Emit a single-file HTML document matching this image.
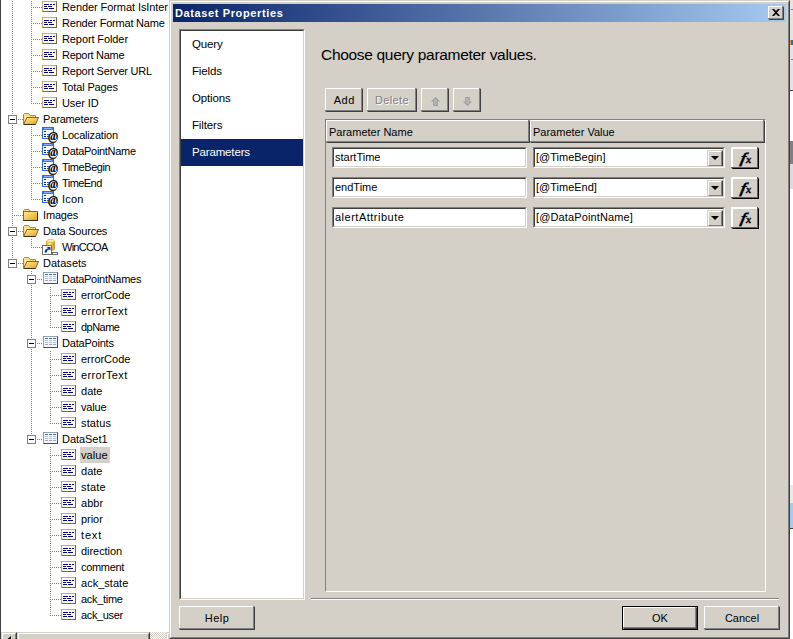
<!DOCTYPE html>
<html><head><meta charset="utf-8"><title>Dataset Properties</title>
<style>
html,body{margin:0;padding:0;}
body{width:793px;height:639px;position:relative;overflow:hidden;background:#fff;font-family:"Liberation Sans",sans-serif;}
*{box-sizing:border-box;}
i,b{display:block;font-style:normal;font-weight:normal;}
#tree{position:absolute;left:0;top:0;width:169px;height:639px;background:#fff;overflow:hidden;font-size:11px;letter-spacing:-0.25px;color:#000;}
#tree .edge{position:absolute;left:0;top:0;width:1px;height:639px;background:#404040;}
.vd{position:absolute;width:1px;background:repeating-linear-gradient(to bottom,#808080 0,#808080 1px,transparent 1px,transparent 2px);}
.hd{position:absolute;height:1px;background:repeating-linear-gradient(to right,#808080 0,#808080 1px,transparent 1px,transparent 2px);}
.bx{position:absolute;width:9px;height:9px;border:1px solid #808080;background:#fff;}
.bx b{position:absolute;left:1px;top:3px;width:5px;height:1px;background:#000;}
.ic{position:absolute;display:block;overflow:visible;}
.tx{position:absolute;height:16px;line-height:16px;padding:0 2px 0 1px;white-space:nowrap;}
.tx.sel{background:#d4d0c8;}
#hs{position:absolute;left:1px;top:632px;width:168px;height:17px;background:#d4d0c8;overflow:hidden;}
.sb{position:absolute;top:0;height:17px;background:#d4d0c8;border-top:1px solid #d4d0c8;border-left:1px solid #d4d0c8;border-right:1px solid #404040;border-bottom:1px solid #404040;}
.sb:before{content:"";position:absolute;left:0;top:0;right:0;bottom:0;border-top:1px solid #fff;border-left:1px solid #fff;border-right:1px solid #808080;border-bottom:1px solid #808080;}
.trk{position:absolute;top:0;height:17px;background:conic-gradient(#fff 25%,#d4d0c8 0 50%,#fff 0 75%,#d4d0c8 0) 0 0/2px 2px;}
#dlg{position:absolute;left:169px;top:0;width:621px;height:639px;background:#d4d0c8;
 border-top:1px solid #d4d0c8;border-left:1px solid #d4d0c8;border-right:1px solid #404040;border-bottom:1px solid #404040;}
#dlg .in{position:absolute;left:0;top:0;width:619px;height:637px;border-top:1px solid #fff;border-left:1px solid #fff;border-right:1px solid #808080;border-bottom:1px solid #808080;}
#title{position:absolute;left:173px;top:4px;width:613px;height:18px;background:linear-gradient(to right,#0a246a,#a6caf0);color:#fff;font-weight:bold;font-size:11px;line-height:18px;padding-left:2px;letter-spacing:0.62px;white-space:nowrap;}
.btn{position:absolute;background:#d4d0c8;border-top:1px solid #fff;border-left:1px solid #fff;border-right:1px solid #404040;border-bottom:1px solid #404040;text-align:center;font-size:11px;color:#000;white-space:nowrap;}
.btn:after{content:"";position:absolute;left:-1px;top:-1px;right:0;bottom:0;border-right:1px solid #808080;border-bottom:1px solid #808080;}
.sunk{position:absolute;background:#fff;border-top:1px solid #808080;border-left:1px solid #808080;border-right:1px solid #fff;border-bottom:1px solid #fff;}
.sunk:after{content:"";position:absolute;left:0;top:0;right:0;bottom:0;border-top:1px solid #404040;border-left:1px solid #404040;border-right:1px solid #d4d0c8;border-bottom:1px solid #d4d0c8;pointer-events:none;}
#side .it{position:absolute;left:1px;width:122px;height:27px;line-height:27px;font-size:11.5px;letter-spacing:-.15px;padding-left:11px;color:#000;white-space:nowrap;}
#side .it.sel{background:#0a246a;color:#fff;}
.t{position:absolute;white-space:nowrap;color:#000;}
.hc{position:absolute;top:120px;height:23px;border-top:1px solid #fff;border-left:1px solid #fff;border-right:1px solid #404040;border-bottom:1px solid #404040;font-size:11px;line-height:23px;padding-left:2px;white-space:nowrap;}
.hc:after{content:"";position:absolute;left:-1px;top:-1px;right:0;bottom:0;border-right:1px solid #808080;border-bottom:1px solid #808080;}
.inp{font-size:11px;line-height:19px;padding-left:2px;white-space:nowrap;}
.dd{position:absolute;right:1px;top:2px;width:16px;height:17px;background:#d4d0c8;border-top:1px solid #d4d0c8;border-left:1px solid #d4d0c8;border-right:1px solid #404040;border-bottom:1px solid #404040;}
.dd:before{content:"";position:absolute;left:0;top:0;right:0;bottom:0;border-top:1px solid #fff;border-left:1px solid #fff;border-right:1px solid #808080;border-bottom:1px solid #808080;}
.dd:after{content:"";position:absolute;left:3px;top:5px;border-left:4px solid transparent;border-right:4px solid transparent;border-top:4px solid #000;}
.fx{border-top:2px solid #fff;border-left:2px solid #fff;border-right:1px solid #000;border-bottom:1px solid #000;}
.fx:after{left:-2px;top:-2px;border-right:1px solid #606060;border-bottom:1px solid #606060;}
.fxf{position:absolute;left:6px;top:1px;font:italic bold 15px/16px "Liberation Serif",serif;transform:skewX(-12deg) scaleX(1.1);transform-origin:0 100%;-webkit-text-stroke:.35px #000;}
.fxx{position:absolute;left:13px;top:3px;font:italic bold 10.5px/16px "Liberation Serif",serif;-webkit-text-stroke:.3px #000;}
</style></head><body>
<svg width="0" height="0" style="position:absolute"><linearGradient id="gF" x1="0" y1="0" x2="1" y2="1"><stop offset="0" stop-color="#ffeda0"/><stop offset=".5" stop-color="#f8c850"/><stop offset="1" stop-color="#e09a18"/></linearGradient><linearGradient id="gC" x1="0" y1="0" x2="1" y2="0"><stop offset="0" stop-color="#f0b020"/><stop offset=".35" stop-color="#fff0a0"/><stop offset="1" stop-color="#d89000"/></linearGradient></svg>
<div id="tree">
<div class="edge"></div>
<i class="vd" style="left:12px;top:-1px;height:260px"></i>
<i class="vd" style="left:31px;top:-1px;height:105px"></i>
<i class="vd" style="left:31px;top:127px;height:73px"></i>
<i class="vd" style="left:31px;top:239px;height:9px"></i>
<i class="vd" style="left:31px;top:271px;height:164px"></i>
<i class="vd" style="left:50px;top:287px;height:41px"></i>
<i class="vd" style="left:50px;top:351px;height:73px"></i>
<i class="vd" style="left:50px;top:447px;height:169px"></i>
<i class="hd" style="left:33px;top:7px;width:9px"></i>
<svg class="ic" style="left:42px;top:1px" width="15" height="11" viewBox="0 0 15 11"><rect x=".5" y=".5" width="14" height="10" fill="#fffdf2" stroke="#7a6444"/><path d="M.5 10.500V.5H14.500" fill="none" stroke="#c8aa6c"/><path d="M2 3.500h5M8 3.500h2M11 3.500h2M2 5.500h3M6 5.500h4M2 7.500h4M7 7.500h5" stroke="#000090" fill="none"/></svg>
<span class="tx" style="left:61px;top:-1px;letter-spacing:-0.08px">Render Format IsInter</span>
<i class="hd" style="left:33px;top:23px;width:9px"></i>
<svg class="ic" style="left:42px;top:17px" width="15" height="11" viewBox="0 0 15 11"><rect x=".5" y=".5" width="14" height="10" fill="#fffdf2" stroke="#7a6444"/><path d="M.5 10.500V.5H14.500" fill="none" stroke="#c8aa6c"/><path d="M2 3.500h5M8 3.500h2M11 3.500h2M2 5.500h3M6 5.500h4M2 7.500h4M7 7.500h5" stroke="#000090" fill="none"/></svg>
<span class="tx" style="left:61px;top:15px;letter-spacing:-0.21px">Render Format Name</span>
<i class="hd" style="left:33px;top:39px;width:9px"></i>
<svg class="ic" style="left:42px;top:33px" width="15" height="11" viewBox="0 0 15 11"><rect x=".5" y=".5" width="14" height="10" fill="#fffdf2" stroke="#7a6444"/><path d="M.5 10.500V.5H14.500" fill="none" stroke="#c8aa6c"/><path d="M2 3.500h5M8 3.500h2M11 3.500h2M2 5.500h3M6 5.500h4M2 7.500h4M7 7.500h5" stroke="#000090" fill="none"/></svg>
<span class="tx" style="left:61px;top:31px;letter-spacing:-0.10px">Report Folder</span>
<i class="hd" style="left:33px;top:55px;width:9px"></i>
<svg class="ic" style="left:42px;top:49px" width="15" height="11" viewBox="0 0 15 11"><rect x=".5" y=".5" width="14" height="10" fill="#fffdf2" stroke="#7a6444"/><path d="M.5 10.500V.5H14.500" fill="none" stroke="#c8aa6c"/><path d="M2 3.500h5M8 3.500h2M11 3.500h2M2 5.500h3M6 5.500h4M2 7.500h4M7 7.500h5" stroke="#000090" fill="none"/></svg>
<span class="tx" style="left:61px;top:47px;letter-spacing:-0.29px">Report Name</span>
<i class="hd" style="left:33px;top:71px;width:9px"></i>
<svg class="ic" style="left:42px;top:65px" width="15" height="11" viewBox="0 0 15 11"><rect x=".5" y=".5" width="14" height="10" fill="#fffdf2" stroke="#7a6444"/><path d="M.5 10.500V.5H14.500" fill="none" stroke="#c8aa6c"/><path d="M2 3.500h5M8 3.500h2M11 3.500h2M2 5.500h3M6 5.500h4M2 7.500h4M7 7.500h5" stroke="#000090" fill="none"/></svg>
<span class="tx" style="left:61px;top:63px;letter-spacing:-0.21px">Report Server URL</span>
<i class="hd" style="left:33px;top:87px;width:9px"></i>
<svg class="ic" style="left:42px;top:81px" width="15" height="11" viewBox="0 0 15 11"><rect x=".5" y=".5" width="14" height="10" fill="#fffdf2" stroke="#7a6444"/><path d="M.5 10.500V.5H14.500" fill="none" stroke="#c8aa6c"/><path d="M2 3.500h5M8 3.500h2M11 3.500h2M2 5.500h3M6 5.500h4M2 7.500h4M7 7.500h5" stroke="#000090" fill="none"/></svg>
<span class="tx" style="left:61px;top:79px;letter-spacing:-0.15px">Total Pages</span>
<i class="hd" style="left:33px;top:103px;width:9px"></i>
<svg class="ic" style="left:42px;top:97px" width="15" height="11" viewBox="0 0 15 11"><rect x=".5" y=".5" width="14" height="10" fill="#fffdf2" stroke="#7a6444"/><path d="M.5 10.500V.5H14.500" fill="none" stroke="#c8aa6c"/><path d="M2 3.500h5M8 3.500h2M11 3.500h2M2 5.500h3M6 5.500h4M2 7.500h4M7 7.500h5" stroke="#000090" fill="none"/></svg>
<span class="tx" style="left:61px;top:95px;letter-spacing:-0.11px">User ID</span>
<i class="bx" style="left:8px;top:115px"><b></b></i>
<i class="hd" style="left:18px;top:119px;width:5px"></i>
<svg class="ic" style="left:23px;top:113px" width="16" height="12" viewBox="0 0 16 12"><path d="M.5 11V1.500L1.500 .5H5.500L7 2.500H12.500V5" fill="#f9e38a" stroke="#9a8858"/><path d="M.5 11.500L4 4.500H15.500L12.500 11.500Z" fill="url(#gF)" stroke="#7a683c"/><path d="M1 11.500H12.500" stroke="#3c2e14"/></svg>
<span class="tx" style="left:42px;top:111px;letter-spacing:-0.16px">Parameters</span>
<i class="hd" style="left:33px;top:135px;width:9px"></i>
<svg class="ic" style="left:42px;top:127px" width="17" height="16" viewBox="0 0 17 16"><rect x=".5" y=".5" width="11" height="11" fill="#f4f6ff" stroke="#3068d8"/><rect x="1" y="1" width="10" height="2" fill="#3a78e8"/><path d="M2 1.500H10" stroke="#8ab0f4"/><path d="M2 4.5h2M2 7.5h2M2 9.5h2" stroke="#102070"/><path d="M5 7.5h2M5 9.5h2" stroke="#3060c0"/><circle cx="11" cy="10.5" r="4.700" fill="#fff" stroke="#333" stroke-width=".8"/><text x="10.9" y="13.4" font-family="Liberation Serif, serif" font-style="italic" font-weight="bold" font-size="11.5" text-anchor="middle" fill="#000">@</text></svg>
<span class="tx" style="left:61px;top:127px;letter-spacing:-0.19px">Localization</span>
<i class="hd" style="left:33px;top:151px;width:9px"></i>
<svg class="ic" style="left:42px;top:143px" width="17" height="16" viewBox="0 0 17 16"><rect x=".5" y=".5" width="11" height="11" fill="#f4f6ff" stroke="#3068d8"/><rect x="1" y="1" width="10" height="2" fill="#3a78e8"/><path d="M2 1.500H10" stroke="#8ab0f4"/><path d="M2 4.5h2M2 7.5h2M2 9.5h2" stroke="#102070"/><path d="M5 7.5h2M5 9.5h2" stroke="#3060c0"/><circle cx="11" cy="10.5" r="4.700" fill="#fff" stroke="#333" stroke-width=".8"/><text x="10.9" y="13.4" font-family="Liberation Serif, serif" font-style="italic" font-weight="bold" font-size="11.5" text-anchor="middle" fill="#000">@</text></svg>
<span class="tx" style="left:61px;top:143px;letter-spacing:-0.30px">DataPointName</span>
<i class="hd" style="left:33px;top:167px;width:9px"></i>
<svg class="ic" style="left:42px;top:159px" width="17" height="16" viewBox="0 0 17 16"><rect x=".5" y=".5" width="11" height="11" fill="#f4f6ff" stroke="#3068d8"/><rect x="1" y="1" width="10" height="2" fill="#3a78e8"/><path d="M2 1.500H10" stroke="#8ab0f4"/><path d="M2 4.5h2M2 7.5h2M2 9.5h2" stroke="#102070"/><path d="M5 7.5h2M5 9.5h2" stroke="#3060c0"/><circle cx="11" cy="10.5" r="4.700" fill="#fff" stroke="#333" stroke-width=".8"/><text x="10.9" y="13.4" font-family="Liberation Serif, serif" font-style="italic" font-weight="bold" font-size="11.5" text-anchor="middle" fill="#000">@</text></svg>
<span class="tx" style="left:61px;top:159px;letter-spacing:-0.44px">TimeBegin</span>
<i class="hd" style="left:33px;top:183px;width:9px"></i>
<svg class="ic" style="left:42px;top:175px" width="17" height="16" viewBox="0 0 17 16"><rect x=".5" y=".5" width="11" height="11" fill="#f4f6ff" stroke="#3068d8"/><rect x="1" y="1" width="10" height="2" fill="#3a78e8"/><path d="M2 1.500H10" stroke="#8ab0f4"/><path d="M2 4.5h2M2 7.5h2M2 9.5h2" stroke="#102070"/><path d="M5 7.5h2M5 9.5h2" stroke="#3060c0"/><circle cx="11" cy="10.5" r="4.700" fill="#fff" stroke="#333" stroke-width=".8"/><text x="10.9" y="13.4" font-family="Liberation Serif, serif" font-style="italic" font-weight="bold" font-size="11.5" text-anchor="middle" fill="#000">@</text></svg>
<span class="tx" style="left:61px;top:175px;letter-spacing:-0.55px">TimeEnd</span>
<i class="hd" style="left:33px;top:199px;width:9px"></i>
<svg class="ic" style="left:42px;top:191px" width="17" height="16" viewBox="0 0 17 16"><rect x=".5" y=".5" width="11" height="11" fill="#f4f6ff" stroke="#3068d8"/><rect x="1" y="1" width="10" height="2" fill="#3a78e8"/><path d="M2 1.500H10" stroke="#8ab0f4"/><path d="M2 4.5h2M2 7.5h2M2 9.5h2" stroke="#102070"/><path d="M5 7.5h2M5 9.5h2" stroke="#3060c0"/><circle cx="11" cy="10.5" r="4.700" fill="#fff" stroke="#333" stroke-width=".8"/><text x="10.9" y="13.4" font-family="Liberation Serif, serif" font-style="italic" font-weight="bold" font-size="11.5" text-anchor="middle" fill="#000">@</text></svg>
<span class="tx" style="left:61px;top:191px;letter-spacing:0.21px">Icon</span>
<i class="hd" style="left:14px;top:215px;width:9px"></i>
<svg class="ic" style="left:23px;top:209px" width="15" height="12" viewBox="0 0 15 12"><path d="M.5 2.500V1.500L1.500 .5H6L7 2" fill="#fbe58c" stroke="#9a8858"/><rect x=".5" y="2.500" width="14" height="9" fill="url(#gF)" stroke="#7a683c"/><path d="M.5 11.500H15M14.500 4V11.500" stroke="#3c2e14" fill="none"/></svg>
<span class="tx" style="left:42px;top:207px;letter-spacing:-0.17px">Images</span>
<i class="bx" style="left:8px;top:227px"><b></b></i>
<i class="hd" style="left:18px;top:231px;width:5px"></i>
<svg class="ic" style="left:23px;top:225px" width="16" height="12" viewBox="0 0 16 12"><path d="M.5 11V1.500L1.500 .5H5.500L7 2.500H12.500V5" fill="#f9e38a" stroke="#9a8858"/><path d="M.5 11.500L4 4.500H15.500L12.500 11.500Z" fill="url(#gF)" stroke="#7a683c"/><path d="M1 11.500H12.500" stroke="#3c2e14"/></svg>
<span class="tx" style="left:42px;top:223px;letter-spacing:-0.21px">Data Sources</span>
<i class="hd" style="left:33px;top:247px;width:9px"></i>
<svg class="ic" style="left:42px;top:239px" width="16" height="16" viewBox="0 0 16 16"><path d="M4.5 2V10C4.5 12 12.500 12 12.500 10V2" fill="url(#gC)" stroke="#c08810" stroke-width=".6"/><ellipse cx="8.5" cy="2" rx="4" ry="1.6" fill="#fff2b0" stroke="#d8a020" stroke-width=".6"/><rect x="10.500" y="13.5" width="5" height="2" fill="#fff" stroke="#5070a0"/><rect x="10" y="13" width="1" height="3" fill="#80603a"/><rect x=".5" y="6.500" width="9" height="9" fill="#fff" stroke="#707070"/><path d="M2.500 13.500C2.500 10.500 4.500 9.500 6 9.500L5 8H8.500V11.500L7.200 10.500C5.500 10.800 4.800 12 5 13.500Z" fill="#1040a0"/></svg>
<span class="tx" style="left:61px;top:239px;letter-spacing:-0.75px">WinCCOA</span>
<i class="bx" style="left:8px;top:259px"><b></b></i>
<i class="hd" style="left:18px;top:263px;width:5px"></i>
<svg class="ic" style="left:23px;top:257px" width="16" height="12" viewBox="0 0 16 12"><path d="M.5 11V1.500L1.500 .5H5.500L7 2.500H12.500V5" fill="#f9e38a" stroke="#9a8858"/><path d="M.5 11.500L4 4.500H15.500L12.500 11.500Z" fill="url(#gF)" stroke="#7a683c"/><path d="M1 11.500H12.500" stroke="#3c2e14"/></svg>
<span class="tx" style="left:42px;top:255px;letter-spacing:0.03px">Datasets</span>
<i class="bx" style="left:27px;top:275px"><b></b></i>
<i class="hd" style="left:37px;top:279px;width:5px"></i>
<svg class="ic" style="left:43px;top:272px" width="15" height="12" viewBox="0 0 15 12"><rect x=".5" y=".5" width="14" height="11" fill="#f2f5fb" stroke="#3c5078"/><path d="M.5 11.500V.5H14.500" fill="none" stroke="#90a4c0"/><path d="M2 2.500h3M6 2.500h3M10 2.500h3" stroke="#586a8c"/><path d="M2 4.500h3M6 4.500h3M10 4.500h3M2 6.500h3M6 6.500h3M10 6.500h3" stroke="#b4c2d6"/><path d="M2 8.500h3M6 8.500h3M10 8.500h3" stroke="#98aac4"/></svg>
<span class="tx" style="left:61px;top:271px;letter-spacing:-0.29px">DataPointNames</span>
<i class="hd" style="left:52px;top:295px;width:9px"></i>
<svg class="ic" style="left:61px;top:289px" width="15" height="11" viewBox="0 0 15 11"><rect x=".5" y=".5" width="14" height="10" fill="#fffdf2" stroke="#7a6444"/><path d="M.5 10.500V.5H14.500" fill="none" stroke="#c8aa6c"/><path d="M2 3.500h5M8 3.500h2M11 3.500h2M2 5.500h3M6 5.500h4M2 7.500h4M7 7.500h5" stroke="#000090" fill="none"/></svg>
<span class="tx" style="left:80px;top:287px;letter-spacing:-0.02px">errorCode</span>
<i class="hd" style="left:52px;top:311px;width:9px"></i>
<svg class="ic" style="left:61px;top:305px" width="15" height="11" viewBox="0 0 15 11"><rect x=".5" y=".5" width="14" height="10" fill="#fffdf2" stroke="#7a6444"/><path d="M.5 10.500V.5H14.500" fill="none" stroke="#c8aa6c"/><path d="M2 3.500h5M8 3.500h2M11 3.500h2M2 5.500h3M6 5.500h4M2 7.500h4M7 7.500h5" stroke="#000090" fill="none"/></svg>
<span class="tx" style="left:80px;top:303px;letter-spacing:0.35px">errorText</span>
<i class="hd" style="left:52px;top:327px;width:9px"></i>
<svg class="ic" style="left:61px;top:321px" width="15" height="11" viewBox="0 0 15 11"><rect x=".5" y=".5" width="14" height="10" fill="#fffdf2" stroke="#7a6444"/><path d="M.5 10.500V.5H14.500" fill="none" stroke="#c8aa6c"/><path d="M2 3.500h5M8 3.500h2M11 3.500h2M2 5.500h3M6 5.500h4M2 7.500h4M7 7.500h5" stroke="#000090" fill="none"/></svg>
<span class="tx" style="left:80px;top:319px;letter-spacing:-0.53px">dpName</span>
<i class="bx" style="left:27px;top:339px"><b></b></i>
<i class="hd" style="left:37px;top:343px;width:5px"></i>
<svg class="ic" style="left:43px;top:336px" width="15" height="12" viewBox="0 0 15 12"><rect x=".5" y=".5" width="14" height="11" fill="#f2f5fb" stroke="#3c5078"/><path d="M.5 11.500V.5H14.500" fill="none" stroke="#90a4c0"/><path d="M2 2.500h3M6 2.500h3M10 2.500h3" stroke="#586a8c"/><path d="M2 4.500h3M6 4.500h3M10 4.500h3M2 6.500h3M6 6.500h3M10 6.500h3" stroke="#b4c2d6"/><path d="M2 8.500h3M6 8.500h3M10 8.500h3" stroke="#98aac4"/></svg>
<span class="tx" style="left:61px;top:335px;letter-spacing:-0.21px">DataPoints</span>
<i class="hd" style="left:52px;top:359px;width:9px"></i>
<svg class="ic" style="left:61px;top:353px" width="15" height="11" viewBox="0 0 15 11"><rect x=".5" y=".5" width="14" height="10" fill="#fffdf2" stroke="#7a6444"/><path d="M.5 10.500V.5H14.500" fill="none" stroke="#c8aa6c"/><path d="M2 3.500h5M8 3.500h2M11 3.500h2M2 5.500h3M6 5.500h4M2 7.500h4M7 7.500h5" stroke="#000090" fill="none"/></svg>
<span class="tx" style="left:80px;top:351px;letter-spacing:-0.02px">errorCode</span>
<i class="hd" style="left:52px;top:375px;width:9px"></i>
<svg class="ic" style="left:61px;top:369px" width="15" height="11" viewBox="0 0 15 11"><rect x=".5" y=".5" width="14" height="10" fill="#fffdf2" stroke="#7a6444"/><path d="M.5 10.500V.5H14.500" fill="none" stroke="#c8aa6c"/><path d="M2 3.500h5M8 3.500h2M11 3.500h2M2 5.500h3M6 5.500h4M2 7.500h4M7 7.500h5" stroke="#000090" fill="none"/></svg>
<span class="tx" style="left:80px;top:367px;letter-spacing:0.35px">errorText</span>
<i class="hd" style="left:52px;top:391px;width:9px"></i>
<svg class="ic" style="left:61px;top:385px" width="15" height="11" viewBox="0 0 15 11"><rect x=".5" y=".5" width="14" height="10" fill="#fffdf2" stroke="#7a6444"/><path d="M.5 10.500V.5H14.500" fill="none" stroke="#c8aa6c"/><path d="M2 3.500h5M8 3.500h2M11 3.500h2M2 5.500h3M6 5.500h4M2 7.500h4M7 7.500h5" stroke="#000090" fill="none"/></svg>
<span class="tx" style="left:80px;top:383px;letter-spacing:0.02px">date</span>
<i class="hd" style="left:52px;top:407px;width:9px"></i>
<svg class="ic" style="left:61px;top:401px" width="15" height="11" viewBox="0 0 15 11"><rect x=".5" y=".5" width="14" height="10" fill="#fffdf2" stroke="#7a6444"/><path d="M.5 10.500V.5H14.500" fill="none" stroke="#c8aa6c"/><path d="M2 3.500h5M8 3.500h2M11 3.500h2M2 5.500h3M6 5.500h4M2 7.500h4M7 7.500h5" stroke="#000090" fill="none"/></svg>
<span class="tx" style="left:80px;top:399px;letter-spacing:-0.15px">value</span>
<i class="hd" style="left:52px;top:423px;width:9px"></i>
<svg class="ic" style="left:61px;top:417px" width="15" height="11" viewBox="0 0 15 11"><rect x=".5" y=".5" width="14" height="10" fill="#fffdf2" stroke="#7a6444"/><path d="M.5 10.500V.5H14.500" fill="none" stroke="#c8aa6c"/><path d="M2 3.500h5M8 3.500h2M11 3.500h2M2 5.500h3M6 5.500h4M2 7.500h4M7 7.500h5" stroke="#000090" fill="none"/></svg>
<span class="tx" style="left:80px;top:415px;letter-spacing:0.15px">status</span>
<i class="bx" style="left:27px;top:435px"><b></b></i>
<i class="hd" style="left:37px;top:439px;width:5px"></i>
<svg class="ic" style="left:43px;top:432px" width="15" height="12" viewBox="0 0 15 12"><rect x=".5" y=".5" width="14" height="11" fill="#f2f5fb" stroke="#3c5078"/><path d="M.5 11.500V.5H14.500" fill="none" stroke="#90a4c0"/><path d="M2 2.500h3M6 2.500h3M10 2.500h3" stroke="#586a8c"/><path d="M2 4.500h3M6 4.500h3M10 4.500h3M2 6.500h3M6 6.500h3M10 6.500h3" stroke="#b4c2d6"/><path d="M2 8.500h3M6 8.500h3M10 8.500h3" stroke="#98aac4"/></svg>
<span class="tx" style="left:61px;top:431px;letter-spacing:-0.05px">DataSet1</span>
<i class="hd" style="left:52px;top:455px;width:9px"></i>
<svg class="ic" style="left:61px;top:449px" width="15" height="11" viewBox="0 0 15 11"><rect x=".5" y=".5" width="14" height="10" fill="#fffdf2" stroke="#7a6444"/><path d="M.5 10.500V.5H14.500" fill="none" stroke="#c8aa6c"/><path d="M2 3.500h5M8 3.500h2M11 3.500h2M2 5.500h3M6 5.500h4M2 7.500h4M7 7.500h5" stroke="#000090" fill="none"/></svg>
<span class="tx sel" style="left:80px;top:447px;letter-spacing:0.10px">value</span>
<i class="hd" style="left:52px;top:471px;width:9px"></i>
<svg class="ic" style="left:61px;top:465px" width="15" height="11" viewBox="0 0 15 11"><rect x=".5" y=".5" width="14" height="10" fill="#fffdf2" stroke="#7a6444"/><path d="M.5 10.500V.5H14.500" fill="none" stroke="#c8aa6c"/><path d="M2 3.500h5M8 3.500h2M11 3.500h2M2 5.500h3M6 5.500h4M2 7.500h4M7 7.500h5" stroke="#000090" fill="none"/></svg>
<span class="tx" style="left:80px;top:463px;letter-spacing:0.02px">date</span>
<i class="hd" style="left:52px;top:487px;width:9px"></i>
<svg class="ic" style="left:61px;top:481px" width="15" height="11" viewBox="0 0 15 11"><rect x=".5" y=".5" width="14" height="10" fill="#fffdf2" stroke="#7a6444"/><path d="M.5 10.500V.5H14.500" fill="none" stroke="#c8aa6c"/><path d="M2 3.500h5M8 3.500h2M11 3.500h2M2 5.500h3M6 5.500h4M2 7.500h4M7 7.500h5" stroke="#000090" fill="none"/></svg>
<span class="tx" style="left:80px;top:479px;letter-spacing:0.21px">state</span>
<i class="hd" style="left:52px;top:503px;width:9px"></i>
<svg class="ic" style="left:61px;top:497px" width="15" height="11" viewBox="0 0 15 11"><rect x=".5" y=".5" width="14" height="10" fill="#fffdf2" stroke="#7a6444"/><path d="M.5 10.500V.5H14.500" fill="none" stroke="#c8aa6c"/><path d="M2 3.500h5M8 3.500h2M11 3.500h2M2 5.500h3M6 5.500h4M2 7.500h4M7 7.500h5" stroke="#000090" fill="none"/></svg>
<span class="tx" style="left:80px;top:495px;letter-spacing:0.02px">abbr</span>
<i class="hd" style="left:52px;top:519px;width:9px"></i>
<svg class="ic" style="left:61px;top:513px" width="15" height="11" viewBox="0 0 15 11"><rect x=".5" y=".5" width="14" height="10" fill="#fffdf2" stroke="#7a6444"/><path d="M.5 10.500V.5H14.500" fill="none" stroke="#c8aa6c"/><path d="M2 3.500h5M8 3.500h2M11 3.500h2M2 5.500h3M6 5.500h4M2 7.500h4M7 7.500h5" stroke="#000090" fill="none"/></svg>
<span class="tx" style="left:80px;top:511px;letter-spacing:-0.04px">prior</span>
<i class="hd" style="left:52px;top:535px;width:9px"></i>
<svg class="ic" style="left:61px;top:529px" width="15" height="11" viewBox="0 0 15 11"><rect x=".5" y=".5" width="14" height="10" fill="#fffdf2" stroke="#7a6444"/><path d="M.5 10.500V.5H14.500" fill="none" stroke="#c8aa6c"/><path d="M2 3.500h5M8 3.500h2M11 3.500h2M2 5.500h3M6 5.500h4M2 7.500h4M7 7.500h5" stroke="#000090" fill="none"/></svg>
<span class="tx" style="left:80px;top:527px;letter-spacing:0.82px">text</span>
<i class="hd" style="left:52px;top:551px;width:9px"></i>
<svg class="ic" style="left:61px;top:545px" width="15" height="11" viewBox="0 0 15 11"><rect x=".5" y=".5" width="14" height="10" fill="#fffdf2" stroke="#7a6444"/><path d="M.5 10.500V.5H14.500" fill="none" stroke="#c8aa6c"/><path d="M2 3.500h5M8 3.500h2M11 3.500h2M2 5.500h3M6 5.500h4M2 7.500h4M7 7.500h5" stroke="#000090" fill="none"/></svg>
<span class="tx" style="left:80px;top:543px;letter-spacing:-0.05px">direction</span>
<i class="hd" style="left:52px;top:567px;width:9px"></i>
<svg class="ic" style="left:61px;top:561px" width="15" height="11" viewBox="0 0 15 11"><rect x=".5" y=".5" width="14" height="10" fill="#fffdf2" stroke="#7a6444"/><path d="M.5 10.500V.5H14.500" fill="none" stroke="#c8aa6c"/><path d="M2 3.500h5M8 3.500h2M11 3.500h2M2 5.500h3M6 5.500h4M2 7.500h4M7 7.500h5" stroke="#000090" fill="none"/></svg>
<span class="tx" style="left:80px;top:559px;letter-spacing:-0.32px">comment</span>
<i class="hd" style="left:52px;top:583px;width:9px"></i>
<svg class="ic" style="left:61px;top:577px" width="15" height="11" viewBox="0 0 15 11"><rect x=".5" y=".5" width="14" height="10" fill="#fffdf2" stroke="#7a6444"/><path d="M.5 10.500V.5H14.500" fill="none" stroke="#c8aa6c"/><path d="M2 3.500h5M8 3.500h2M11 3.500h2M2 5.500h3M6 5.500h4M2 7.500h4M7 7.500h5" stroke="#000090" fill="none"/></svg>
<span class="tx" style="left:80px;top:575px;letter-spacing:0.02px">ack_state</span>
<i class="hd" style="left:52px;top:599px;width:9px"></i>
<svg class="ic" style="left:61px;top:593px" width="15" height="11" viewBox="0 0 15 11"><rect x=".5" y=".5" width="14" height="10" fill="#fffdf2" stroke="#7a6444"/><path d="M.5 10.500V.5H14.500" fill="none" stroke="#c8aa6c"/><path d="M2 3.500h5M8 3.500h2M11 3.500h2M2 5.500h3M6 5.500h4M2 7.500h4M7 7.500h5" stroke="#000090" fill="none"/></svg>
<span class="tx" style="left:80px;top:591px;letter-spacing:-0.31px">ack_time</span>
<i class="hd" style="left:52px;top:615px;width:9px"></i>
<svg class="ic" style="left:61px;top:609px" width="15" height="11" viewBox="0 0 15 11"><rect x=".5" y=".5" width="14" height="10" fill="#fffdf2" stroke="#7a6444"/><path d="M.5 10.500V.5H14.500" fill="none" stroke="#c8aa6c"/><path d="M2 3.500h5M8 3.500h2M11 3.500h2M2 5.500h3M6 5.500h4M2 7.500h4M7 7.500h5" stroke="#000090" fill="none"/></svg>
<span class="tx" style="left:80px;top:607px;letter-spacing:-0.37px">ack_user</span>
<div id="hs">
<i class="sb" style="left:0;width:16px"><svg style="position:absolute;left:5px;top:3px" width="4" height="7" viewBox="0 0 4 7"><path d="M4 0V7L0 3.500Z" fill="#000"/></svg></i>
<i class="sb" style="left:16px;width:133px"></i>
<i class="trk" style="left:149px;width:16px"></i>
<i class="sb" style="left:165px;width:16px"></i>
</div>
</div>
<div id="strip" style="position:absolute;left:790px;top:0;width:3px;height:639px;background:#fff;">
<i style="position:absolute;left:0;top:0;width:3px;height:90px;background:#e4e4e4"></i>
<i style="position:absolute;left:1px;top:9px;width:2px;height:1px;background:#808080"></i>
<i style="position:absolute;left:1px;top:59px;width:2px;height:1px;background:#808080"></i>
<i style="position:absolute;left:0;top:40px;width:1px;height:5px;background:#e89838"></i>
<i style="position:absolute;left:1px;top:40px;width:2px;height:5px;background:#2868c8"></i>
<i style="position:absolute;left:0;top:90px;width:3px;height:1px;background:#404040"></i>
<i style="position:absolute;left:0;top:141px;width:3px;height:23px;background:#808080"></i>
<i style="position:absolute;left:0;top:164px;width:3px;height:25px;background:#dcdcdc"></i>
<i style="position:absolute;left:0;top:485px;width:3px;height:18px;background:#ebe9e4"></i>
<i style="position:absolute;left:0;top:503px;width:3px;height:25px;background:#a6caf0"></i>
<i style="position:absolute;left:0;top:528px;width:3px;height:1px;background:#404040"></i>
</div>
<div id="dlg"><div class="in"></div></div>
<div id="title">Dataset Properties</div>
<div class="btn" style="left:768px;top:6px;width:16px;height:14px;"><svg style="position:absolute;left:3px;top:2px" width="8" height="7" viewBox="0 0 8 7"><path d="M0 0h2l2 2 2-2h2L5 3.500 8 7H6L4 5 2 7H0L3 3.500Z" fill="#000"/></svg></div>

<div id="side" class="sunk" style="left:179px;top:29px;width:126px;height:571px;">
<div class="it" style="top:1px">Query</div>
<div class="it" style="top:28px">Fields</div>
<div class="it" style="top:55px">Options</div>
<div class="it" style="top:82px">Filters</div>
<div class="it sel" style="top:109px">Parameters</div>
</div>

<div class="t" style="left:321px;top:45px;font-size:15.5px;letter-spacing:-.31px;line-height:20px;">Choose query parameter values.</div>

<div class="btn" style="left:325px;top:88px;width:38px;height:24px;line-height:22px;letter-spacing:.5px;text-indent:.5px;">Add</div>
<div class="btn" style="left:367px;top:88px;width:50px;height:24px;line-height:22px;color:#808080;text-shadow:1px 1px 0 #fff;letter-spacing:.4px;">Delete</div>
<div class="btn" style="left:421px;top:88px;width:28px;height:24px;"><svg style="position:absolute;left:9px;top:8px" width="9" height="9" viewBox="0 0 9 9"><path d="M4.500 0L9 4.500H6.800V9H2.200V4.500H0Z" fill="#9c9c9c"/><path d="M4.500 1.500L6.800 4H5.800V8H3.200V4H2.200Z" fill="#b6b6b6"/></svg></div>
<div class="btn" style="left:453px;top:88px;width:28px;height:24px;"><svg style="position:absolute;left:9px;top:8px" width="9" height="9" viewBox="0 0 9 9"><path d="M4.500 9L9 4.500H6.800V0H2.200V4.500H0Z" fill="#9c9c9c"/><path d="M4.500 7.500L6.800 5H5.800V1H3.200V5H2.200Z" fill="#b6b6b6"/></svg></div>

<div id="grid" style="position:absolute;left:325px;top:119px;width:441px;height:473px;border-top:1px solid #808080;border-left:1px solid #808080;border-right:1px solid #fff;border-bottom:1px solid #fff;"></div>
<div class="hc" style="left:326px;width:204px;">Parameter Name</div>
<div class="hc" style="left:530px;width:235px;">Parameter Value</div>

<div class="sunk inp" style="left:332px;top:147px;width:195px;height:21px;"><span style="position:relative;top:0px;left:0">startTime</span></div>
<div class="sunk inp" style="left:332px;top:177px;width:195px;height:21px;">endTime</div>
<div class="sunk inp" style="left:332px;top:207px;width:195px;height:21px;letter-spacing:.5px;">alertAttribute</div>

<div class="sunk inp" style="left:533px;top:147px;width:192px;height:21px;">[@TimeBegin]<i class="dd"></i></div>
<div class="sunk inp" style="left:533px;top:177px;width:192px;height:21px;">[@TimeEnd]<i class="dd"></i></div>
<div class="sunk inp" style="left:533px;top:207px;width:192px;height:21px;letter-spacing:.13px;">[@DataPointName]<i class="dd"></i></div>

<div class="btn fx" style="left:731px;top:147px;width:28px;height:22px;"><span class="fxf">f</span><span class="fxx">x</span></div>
<div class="btn fx" style="left:731px;top:177px;width:28px;height:22px;"><span class="fxf">f</span><span class="fxx">x</span></div>
<div class="btn fx" style="left:731px;top:207px;width:28px;height:22px;"><span class="fxf">f</span><span class="fxx">x</span></div>

<i style="position:absolute;left:311px;top:598px;width:468px;height:2px;border-top:1px solid #808080;border-bottom:1px solid #fff;"></i>

<div class="btn" style="left:179px;top:606px;width:76px;height:24px;line-height:22px;letter-spacing:.5px;">Help</div>
<div style="position:absolute;left:622px;top:606px;width:76px;height:24px;border:1px solid #000;"><div class="btn" style="left:0;top:0;width:74px;height:22px;line-height:20px;">OK</div></div>
<div class="btn" style="left:704px;top:606px;width:76px;height:24px;line-height:22px;">Cancel</div>
</body></html>
